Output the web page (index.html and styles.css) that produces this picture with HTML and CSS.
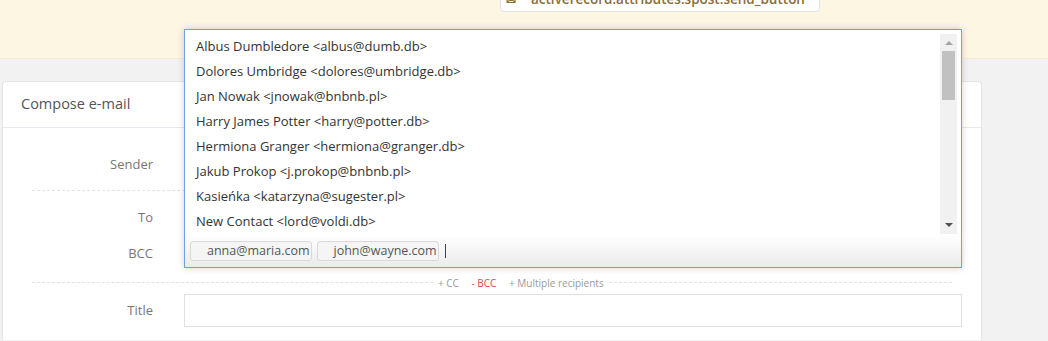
FILE: index.html
```html
<!DOCTYPE html>
<html lang="en">
<head>
    <meta charset="UTF-8">
    <title>Compose e-mail</title>
    <link rel="stylesheet" href="styles.css">
</head>
<body>
    <div class="notice">
        <div class="notice-box">
            <div class="notice-text"><span class="notice-icon">&#9993;</span>activerecord.attributes.spost.send_button</div>
        </div>
    </div>

    <div class="page">
        <div class="card">
            <div class="card-head">Compose e-mail</div>
            <div class="form">
                <div class="row row-sender">
                    <div class="label">Sender</div>
                    <div class="field"></div>
                </div>
                <div class="row row-to">
                    <div class="label">To</div>
                    <div class="field"></div>
                </div>
                <div class="row row-bcc">
                    <div class="label">BCC</div>
                    <div class="field"></div>
                </div>
                <div class="divider">
                    <span class="dash dash-left"></span>
                    <span class="links">
                        <a class="link">+ CC</a>
                        <a class="link link-red">- BCC</a>
                        <a class="link">+ Multiple recipients</a>
                    </span>
                    <span class="dash"></span>
                </div>
                <div class="row row-title">
                    <div class="label">Title</div>
                    <div class="field"><div class="input"></div></div>
                </div>
            </div>
        </div>
    </div>

    <div class="dropdown">
        <ul class="options">
            <li>Albus Dumbledore &lt;albus@dumb.db&gt;</li>
            <li>Dolores Umbridge &lt;dolores@umbridge.db&gt;</li>
            <li>Jan Nowak &lt;jnowak@bnbnb.pl&gt;</li>
            <li>Harry James Potter &lt;harry@potter.db&gt;</li>
            <li>Hermiona Granger &lt;hermiona@granger.db&gt;</li>
            <li>Jakub Prokop &lt;j.prokop@bnbnb.pl&gt;</li>
            <li>Kasieńka &lt;katarzyna@sugester.pl&gt;</li>
            <li>New Contact &lt;lord@voldi.db&gt;</li>
            <li>Ron Weasley &lt;ron@weasley.db&gt;</li>
        </ul>
        <div class="scrollbar">
            <span class="arrow arrow-up"></span>
            <span class="thumb"></span>
            <span class="arrow arrow-down"></span>
        </div>
        <div class="tokens">
            <span class="token">anna@maria.com</span>
            <span class="token">john@wayne.com</span>
            <span class="caret"></span>
        </div>
    </div>
</body>
</html>
```

FILE: styles.css
```css
html, body {
    height: 341px;
    overflow: hidden;
}
body {
    margin: 0;
    background: #f2f2f2;
    font-family: 'Open Sans', sans-serif;
    color: #333;
}
.notice {
    height: 58px;
    background: #fcf6e2;
    border-bottom: 1px solid #f7ecd0;
}
.notice-box {
    margin-left: 500px;
    width: 318px;
    height: 11px;
    background: #fff;
    border: 1px solid #dfe4ea;
    border-top: none;
    border-radius: 0 0 4px 4px;
    overflow: hidden;
}
.notice-text {
    margin-top: -11px;
    padding-left: 5px;
    font-size: 13.5px;
    font-weight: 600;
    line-height: 20px;
    color: #8a6d3b;
    white-space: nowrap;
}
.notice-icon {
    display: inline-block;
    width: 25px;
    font-size: 12px;
}
.page {
    padding: 22px 0 0 2px;
}
.card {
    width: 978px;
    height: 258px;
    background: #fff;
    border: 1px solid #e4e4e4;
    border-bottom: none;
    border-radius: 4px 4px 0 0;
}
.card-head {
    height: 45px;
    line-height: 44px;
    padding: 0 18px;
    font-size: 14.5px;
    color: #555;
    border-bottom: 1px solid #e6e9ed;
}
.form {
    padding: 0 19px 0 29px;
}
.row {
    display: flex;
    align-items: center;
}
.label {
    width: 121px;
    margin-right: 31px;
    text-align: right;
    font-size: 13px;
    color: #777;
}
.field {
    flex: 1;
    height: 32px;
}
.row-sender {
    padding: 20px 0 10px;
    margin-right: 10px;
    border-bottom: 1px dashed #e2e2e2;
}
.row-to {
    padding-top: 10px;
}
.row-bcc {
    padding: 4px 0 13px;
}
.divider {
    display: flex;
    align-items: center;
    height: 1px;
    margin-right: 10px;
}
.dash {
    flex: 1;
    border-top: 1px dashed #e2e2e2;
}
.dash-left {
    flex: none;
    width: 401px;
}
.links {
    padding: 0 5px;
    font-size: 10px;
    white-space: nowrap;
}
.link {
    margin-right: 10px;
    color: #999;
}
.link:last-child {
    margin-right: 0;
}
.link-red {
    color: #e0484b;
}
.row-title {
    padding-top: 11px;
}
.input {
    height: 31px;
    border: 1px solid #e0e0e0;
}

/* recipient picker, open over the form */
.dropdown {
    position: absolute;
    left: 184px;
    top: 29px;
    width: 776px;
    height: 237px;
    background: #fff;
    border: 1px solid #6d9fee;
    box-shadow: 0 0 7px rgba(0, 0, 0, 0.18);
    overflow: hidden;
}
.options {
    list-style: none;
    margin: 0;
    padding: 4px 0 0 11px;
    height: 201px;
    overflow: hidden;
    font-size: 13px;
    line-height: 25px;
    color: #333;
}
.scrollbar {
    position: absolute;
    right: 4px;
    top: 4px;
    width: 17px;
    height: 200px;
    background: #f1f1f1;
}
.thumb {
    position: absolute;
    left: 2px;
    top: 17px;
    width: 13px;
    height: 49px;
    background: #c1c1c1;
}
.arrow {
    position: absolute;
    left: 5px;
    width: 0;
    height: 0;
    border-left: 4px solid transparent;
    border-right: 4px solid transparent;
}
.arrow-up {
    top: 7px;
    border-bottom: 4px solid #a3a3a3;
}
.arrow-down {
    bottom: 7px;
    border-top: 4px solid #505050;
}
.tokens {
    display: flex;
    align-items: center;
    gap: 5px;
    height: 32px;
    padding-left: 5px;
    background: linear-gradient(#fff, #ebebeb);
}
.token {
    height: 18px;
    line-height: 18px;
    padding: 0 1px 0 16px;
    font-size: 12.5px;
    color: #555;
    background: #f5f5f5;
    border: 1px solid #d9d9d9;
    border-radius: 3px;
}
.caret {
    width: 1px;
    height: 14px;
    margin-left: 1px;
    background: #444;
}
```
